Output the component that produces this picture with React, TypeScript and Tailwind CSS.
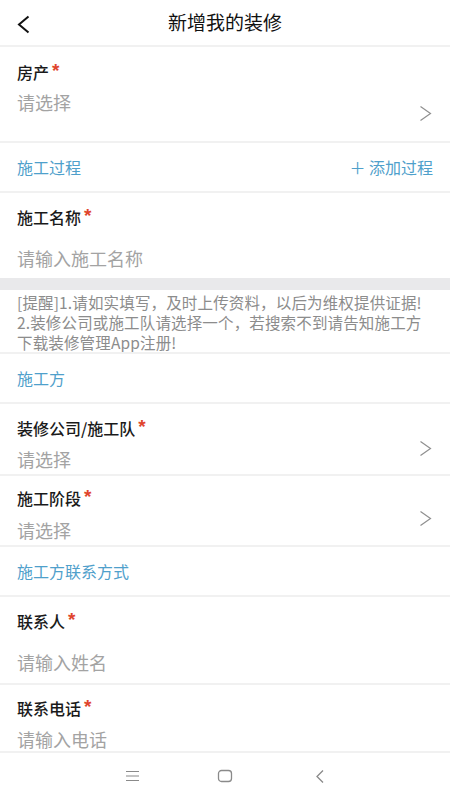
import React from "react";

const FONT = { fontFamily: '"Noto Sans CJK SC", "Noto Sans", sans-serif' };

function Divider() {
  return <div className="h-[2px] bg-[#f1f1f1]" />;
}

function Chevron() {
  return (
    <svg width="13" height="17" viewBox="0 0 13 17" className="shrink-0">
      <path d="M1.5 1.5 L11.5 8.5 L1.5 15.5" fill="none" stroke="#8f8f8f" strokeWidth="1.2" />
    </svg>
  );
}

function Label({ text }: { text: string }) {
  return (
    <div className="flex items-start h-[24px] leading-[24px] text-[16px] font-medium text-[#1a1a1a]">
      <span>{text}</span>
      <span className="text-[#e0452d] text-[19px] leading-[22px] font-bold ml-[3px]" style={{ fontFamily: '"Liberation Sans", sans-serif' }}>*</span>
    </div>
  );
}

function Placeholder({ text }: { text: string }) {
  return <div className="h-[24px] leading-[24px] text-[18px] text-[#a3a3a3]">{text}</div>;
}

function Section({ text, right }: { text: string; right?: string }) {
  return (
    <div className="h-[48px] flex items-center justify-between px-[17px] text-[16px] text-[#4fa0cb]">
      <span>{text}</span>
      {right && <span>＋ {right}</span>}
    </div>
  );
}

export default function App() {
  return (
    <div className="w-[450px] h-[800px] bg-white flex flex-col overflow-hidden" style={FONT}>
      {/* header */}
      <div className="h-[45px] relative flex items-center justify-center">
        <svg width="14" height="20" viewBox="0 0 14 20" className="absolute left-[17px] top-[15px]">
          <path d="M11.5 1.5 L2 9.5 L11.5 17.5" fill="none" stroke="#111" strokeWidth="2" />
        </svg>
        <span className="text-[19px] text-[#111]">新增我的装修</span>
      </div>
      <Divider />

      {/* 房产 */}
      <div className="h-[94px] flex px-[17px] justify-between">
        <div className="flex flex-col pt-[13px] gap-[6px]">
          <Label text="房产" />
          <Placeholder text="请选择" />
        </div>
        <div className="self-end mb-[19px] mr-[1px]">
          <Chevron />
        </div>
      </div>
      <Divider />

      <Section text="施工过程" right="添加过程" />
      <Divider />

      {/* 施工名称 */}
      <div className="h-[85px] flex flex-col px-[17px] pt-[12px] gap-[17px]">
        <Label text="施工名称" />
        <Placeholder text="请输入施工名称" />
      </div>
      <div className="h-[12px] bg-[#e9e9eb]" />

      {/* notice */}
      <div className="h-[62px] px-[17px] pt-[2px] text-[15.5px] leading-[20px] text-[#8c8c8c] whitespace-nowrap tracking-[0.15px]">
        <div>[提醒]1.请如实填写，及时上传资料，以后为维权提供证据!</div>
        <div>2.装修公司或施工队请选择一个，若搜索不到请告知施工方</div>
        <div>下载装修管理App注册!</div>
      </div>
      <Divider />

      <Section text="施工方" />
      <Divider />

      {/* 装修公司 */}
      <div className="h-[70px] flex px-[17px] justify-between">
        <div className="flex flex-col pt-[12px] gap-[7px]">
          <Label text="装修公司/施工队" />
          <Placeholder text="请选择" />
        </div>
        <div className="self-end mb-[17px] mr-[1px]">
          <Chevron />
        </div>
      </div>
      <Divider />

      {/* 施工阶段 */}
      <div className="h-[69px] flex px-[17px] justify-between">
        <div className="flex flex-col pt-[10px] gap-[8px]">
          <Label text="施工阶段" />
          <Placeholder text="请选择" />
        </div>
        <div className="self-end mb-[18px] mr-[1px]">
          <Chevron />
        </div>
      </div>
      <Divider />

      <Section text="施工方联系方式" />
      <Divider />

      {/* 联系人 */}
      <div className="h-[86px] flex flex-col px-[17px] pt-[12px] gap-[17px]">
        <Label text="联系人" />
        <Placeholder text="请输入姓名" />
      </div>
      <Divider />

      {/* 联系电话 */}
      <div className="h-[66px] flex flex-col px-[17px] pt-[11px] gap-[7px]">
        <Label text="联系电话" />
        <Placeholder text="请输入电话" />
      </div>
      <Divider />

      {/* nav bar */}
      <div className="flex-1 flex items-center pl-[125px] pb-[1px]">
        <svg width="15" height="12" viewBox="0 0 15 12">
          <path d="M1 1.5 H14 M1 6 H14 M1 10.5 H14" stroke="#8a8a8a" strokeWidth="1.2" />
        </svg>
        <svg width="16" height="14" viewBox="0 0 16 14" className="ml-[77px]">
          <rect x="1.5" y="1.5" width="13" height="11" rx="3" fill="none" stroke="#8a8a8a" strokeWidth="1.3" />
        </svg>
        <svg width="10" height="15" viewBox="0 0 10 15" className="ml-[82px]">
          <path d="M8 1.5 L2 7.5 L8 13.5" fill="none" stroke="#8a8a8a" strokeWidth="1.3" />
        </svg>
      </div>
    </div>
  );
}
